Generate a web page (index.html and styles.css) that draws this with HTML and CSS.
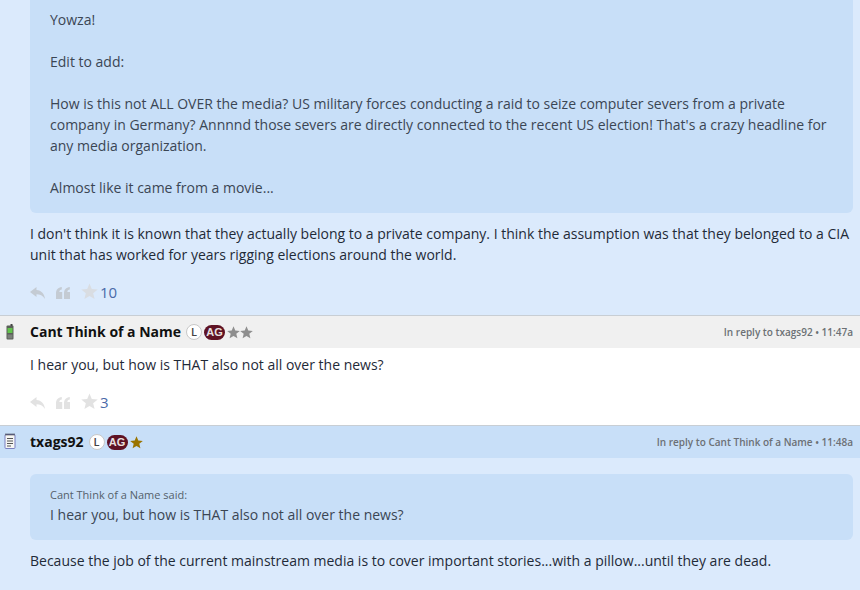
FILE: index.html
```html
<!DOCTYPE html>
<html lang="en">
<head>
<meta charset="utf-8">
<title>Thread</title>
<link rel="stylesheet" href="styles.css">
</head>
<body>
<svg class="defs" width="0" height="0" aria-hidden="true">
  <defs>
    <symbol id="star" viewBox="0 0 20 20"><path d="M10 .5l2.700 6.500 7 .5-5.400 4.500 1.700 6.900-6-3.700-6 3.700 1.700-6.900L.300 7.500l7-.5z"/></symbol>
    <symbol id="reply" viewBox="0 0 15 12"><path d="M6.500 0L0 5l6.500 5V7.200c3.500 0 6.300 1.200 8.500 4.800C14.500 7 11.500 3.300 6.500 3z"/></symbol>
    <symbol id="quote" viewBox="0 0 14 12"><path d="M0 12V6.500C0 2.500 2 .6 5.800 0v2.500C4.300 2.900 3.400 3.600 3.300 5H6.200v7zM8 12V6.500C8 2.500 10 .6 13.800 0v2.500C12.300 2.900 11.400 3.600 11.300 5H14.200v7z"/></symbol>
  </defs>
</svg>

<article class="post post-blue">
  <div class="post-body">
    <blockquote class="quote quote-top">
      <p>Yowza!</p>
      <p>Edit to add:</p>
      <p>How is this not ALL OVER the media? US military forces conducting a raid to seize computer severs from a private company in Germany? Annnnd those severs are directly connected to the recent US election! That's a crazy headline for any media organization.</p>
      <p>Almost like it came from a movie...</p>
    </blockquote>
    <p class="text">I don't think it is known that they actually belong to a private company. I think the assumption was that they belonged to a CIA unit that has worked for years rigging elections around the world.</p>
    <div class="actions">
      <svg class="ic-reply"><use href="#reply"/></svg>
      <svg class="ic-quote"><use href="#quote"/></svg>
      <svg class="ic-star"><use href="#star"/></svg>
      <span class="count">10</span>
    </div>
  </div>
</article>

<article class="post post-white">
  <header class="head head-grey">
    <svg class="device device-phone" viewBox="0 0 8 16"><rect x="0.500" y="1.500" width="7" height="14" rx="1" fill="#5a5f58"/><rect x="4.500" y="0" width="2" height="2" fill="#444"/><rect x="1.500" y="4" width="5" height="5" fill="#62c44c"/><rect x="1.500" y="10.500" width="5" height="4" fill="#7b807a"/></svg>
    <strong class="name">Cant Think of a Name</strong>
    <span class="badge-l">L</span>
    <span class="badge-ag">AG</span>
    <span class="stars stars-grey"><svg><use href="#star"/></svg><svg><use href="#star"/></svg></span>
    <span class="meta">In reply to txags92 • 11:47a</span>
  </header>
  <div class="post-body">
    <p class="text">I hear you, but how is THAT also not all over the news?</p>
    <div class="actions actions-white">
      <svg class="ic-reply"><use href="#reply"/></svg>
      <svg class="ic-quote"><use href="#quote"/></svg>
      <svg class="ic-star"><use href="#star"/></svg>
      <span class="count">3</span>
    </div>
  </div>
</article>

<article class="post post-blue">
  <header class="head head-blue">
    <svg class="device device-note" viewBox="0 0 12 16"><rect x="1" y="1.500" width="10" height="14" rx="1" fill="#f6f6f4" stroke="#7a7fc0"/><path d="M3 5.500h6M3 8h6M3 10.500h6M3 13h4" stroke="#555" fill="none"/><path d="M1.500 1.500h9" stroke="#333" stroke-width="2" stroke-dasharray="1 1" fill="none"/></svg>
    <strong class="name">txags92</strong>
    <span class="badge-l">L</span>
    <span class="badge-ag">AG</span>
    <span class="stars stars-gold"><svg><use href="#star"/></svg></span>
    <span class="meta">In reply to Cant Think of a Name • 11:48a</span>
  </header>
  <div class="post-body body-last">
    <blockquote class="quote quote-inner">
      <div class="said">Cant Think of a Name said:</div>
      <p>I hear you, but how is THAT also not all over the news?</p>
    </blockquote>
    <p class="text">Because the job of the current mainstream media is to cover important stories...with a pillow...until they are dead.</p>
  </div>
</article>
</body>
</html>
```
FILE: styles.css
```css
* { box-sizing: border-box; }
html, body { margin: 0; padding: 0; }
body {
  width: 860px;
  height: 590px;
  overflow: hidden;
  font-family: "Open Sans", "Liberation Sans", sans-serif;
  font-size: 14px;
  line-height: 21px;
  color: #1f2a38;
  background: #dbeafc;
}
.defs { position: absolute; }
p { margin: 0; }

.post-blue { background: #dbeafc; }
.post-white { background: #fff; }

.post-body { padding: 0 7px 0 30px; }

.quote {
  margin: 0;
  background: #c8dff8;
  border-radius: 6px;
  color: #3b4654;
}
.quote p + p { margin-top: 21px; }
.quote-top {
  padding: 9px 20px 15px;
  border-radius: 0 0 6px 6px;
}
.quote-inner {
  padding: 12px 20px 15px;
  margin-bottom: 10px;
}
.said {
  font-size: 11px;
  line-height: 18px;
  color: #555f6b;
}
.text { color: #1f2a38; }
.quote-top + .text { padding-top: 10px; }

.actions {
  display: flex;
  align-items: center;
  box-sizing: content-box;
  height: 21px;
  padding: 16px 0 13px;
}
.actions svg { display: block; }
.actions .ic-reply, .actions .ic-quote { fill: #c4cbd3; }
.actions .ic-star { fill: #d9dde2; }
.actions-white .ic-reply, .actions-white .ic-quote, .actions-white .ic-star { fill: #e2e2e2; }
.ic-reply { width: 15px; height: 12px; margin-top: 2px; }
.ic-quote { width: 14px; height: 12px; margin: 2px 0 0 11px; }
.ic-star { width: 17px; height: 17px; margin-left: 11px; }
.count {
  margin: 2px 0 0 2px;
  font-size: 15px;
  color: #4a6aa8;
}

.head {
  display: flex;
  align-items: center;
  height: 33px;
  padding: 0 7px 0 30px;
  border-top: 1px solid #c8ced4;
  position: relative;
}
.head-grey { background: #f0f0f0; }
.head-blue { background: #c8dff8; }
.head + .post-body { padding-top: 6px; }
.head-blue + .post-body { padding-top: 16px; }
.device { position: absolute; }
.device-phone { left: 6px; top: 8px; width: 8px; height: 16px; }
.device-note { left: 4px; top: 7px; width: 12px; height: 16px; }
.name { font-weight: 700; font-size: 14px; color: #111; margin-top: -2px; }
.badge-l {
  width: 16px;
  height: 16px;
  margin-left: 5px;
  border-radius: 50%;
  background: #fff;
  border: 1px solid #c8c8c8;
  color: #444;
  font-size: 11px;
  font-weight: 600;
  line-height: 14px;
  text-align: center;
}
.badge-ag {
  width: 21px;
  height: 15px;
  margin-left: 2px;
  border-radius: 8px;
  background: #5e1224;
  color: #e8e0e0;
  font-family: "Liberation Sans", sans-serif;
  font-size: 11px;
  font-weight: 700;
  line-height: 15px;
  text-align: center;
}
.stars { display: flex; margin-left: 2px; }
.stars svg { width: 13px; height: 13px; display: block; }
.stars-grey { fill: #8e8e8e; }
.stars-gold { fill: #9a7400; }
.meta {
  margin-left: auto;
  font-size: 10px;
  font-weight: 600;
  color: #6c7075;
}
```
